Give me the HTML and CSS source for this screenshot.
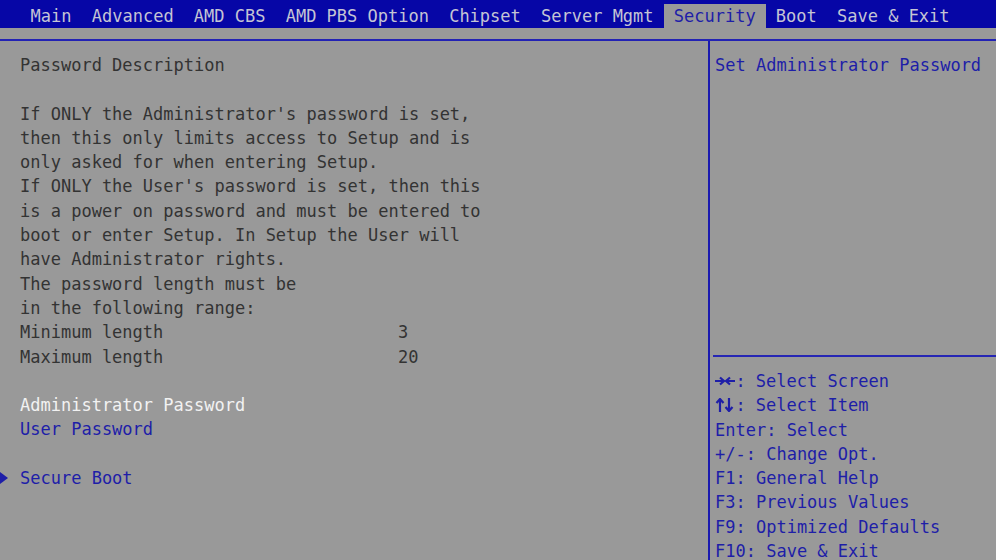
FILE: index.html
```html
<!DOCTYPE html>
<html>
<head>
<meta charset="utf-8">
<link rel="stylesheet" href="styles.css">
</head>
<body>
<div class="screen">
  <div class="menubar">
    <span class="tab">Main</span>
    <span class="tab">Advanced</span>
    <span class="tab">AMD CBS</span>
    <span class="tab">AMD PBS Option</span>
    <span class="tab">Chipset</span>
    <span class="tab">Server Mgmt</span>
    <span class="tab active">Security</span>
    <span class="tab">Boot</span>
    <span class="tab">Save &amp; Exit</span>
  </div>
  <div class="strip"></div>
  <div class="main">
    <div class="left">
      <div class="row">Password Description</div>
      <div class="row"></div>
      <div class="row">If ONLY the Administrator's password is set,</div>
      <div class="row">then this only limits access to Setup and is</div>
      <div class="row">only asked for when entering Setup.</div>
      <div class="row">If ONLY the User's password is set, then this</div>
      <div class="row">is a power on password and must be entered to</div>
      <div class="row">boot or enter Setup. In Setup the User will</div>
      <div class="row">have Administrator rights.</div>
      <div class="row">The password length must be</div>
      <div class="row">in the following range:</div>
      <div class="row"><span class="label">Minimum length</span><span>3</span></div>
      <div class="row"><span class="label">Maximum length</span><span>20</span></div>
      <div class="row"></div>
      <div class="row selected">Administrator Password</div>
      <div class="row link">User Password</div>
      <div class="row"></div>
      <div class="row link sub"><span class="arrow"><svg width="8" height="12" viewBox="0 0 8 12"><polygon points="0,0 8,6 0,12" fill="#1e1ea8"/></svg></span>Secure Boot</div>
    </div>
    <div class="right">
      <div class="help-top">Set Administrator Password</div>
      <div class="help-keys">
        <div class="row"><span class="glyph" aria-label="→←"><svg width="20" height="14" viewBox="0 0 20 14"><g fill="none" stroke="#1e1ea8" stroke-width="2.2"><path d="M0 7H9M5 3.5L9 7L5 10.5"/><path d="M20 7H11M15 3.5L11 7L15 10.5"/></g></svg></span>: Select Screen</div>
        <div class="row"><span class="glyph" aria-label="↑↓"><svg width="20" height="14" viewBox="0 0 20 14"><g fill="none" stroke="#1e1ea8" stroke-width="2.2"><path d="M5 14V1M1.5 5L5 1L8.5 5"/><path d="M14 0V13M10.5 9L14 13L17.5 9"/></g></svg></span>: Select Item</div>
        <div class="row">Enter: Select</div>
        <div class="row">+/-: Change Opt.</div>
        <div class="row">F1: General Help</div>
        <div class="row">F3: Previous Values</div>
        <div class="row">F9: Optimized Defaults</div>
        <div class="row">F10: Save &amp; Exit</div>
      </div>
    </div>
  </div>
</div>
</body>
</html>
```
FILE: styles.css
```css
html, body {
  margin: 0;
  padding: 0;
  background: #999999;
}
.screen {
  width: 996px;
  height: 560px;
  overflow: hidden;
  background: #999999;
  font-family: "DejaVu Sans Mono", "Liberation Mono", monospace;
  font-size: 17px;
  color: #333333;
}
.menubar {
  height: 28px;
  background: #0606a6;
  display: flex;
  align-items: flex-end;
  padding-left: 20.5px;
  box-sizing: border-box;
}
.tab {
  height: 24px;
  line-height: 24px;
  padding: 0 10.1px;
  color: #c4c4d4;
  white-space: pre;
}
.tab.active {
  background: #999999;
  color: #1e1ea8;
}
.strip {
  height: 11px;
  border-bottom: 2px solid #2222b4;
}
.main {
  display: grid;
  grid-template-columns: 708px 1fr;
  height: 519px;
}
.left {
  padding-top: 12px;
}
.left .row {
  padding-left: 20px;
}
.row {
  height: 24.3px;
  line-height: 24.3px;
  white-space: pre;
}
.label {
  display: inline-block;
  width: 378px;
}
.selected {
  color: #f2f2f2;
}
.link {
  color: #1e1ea8;
}
.left .row.sub {
  padding-left: 0;
  display: flex;
  align-items: center;
}
.arrow {
  width: 20px;
  display: flex;
  align-items: center;
}
.arrow svg {
  display: block;
}
.right {
  border-left: 2px solid #1a1ab0;
  display: flex;
  flex-direction: column;
  color: #1e1ea8;
}
.help-top {
  height: 314px;
  box-sizing: border-box;
  padding-top: 12px;
  padding-left: 5px;
  line-height: 24.3px;
  white-space: pre;
}
.help-keys {
  margin-left: 3px;
  padding-left: 2px;
  border-top: 2px solid #2626b4;
  padding-top: 12px;
}
.glyph {
  display: inline-block;
  width: 20.4px;
  vertical-align: -1px;
}
.glyph svg {
  display: block;
}
```
